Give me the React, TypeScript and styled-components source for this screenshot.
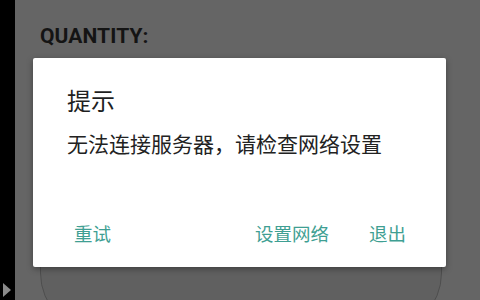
import React from "react";
import styled, { createGlobalStyle } from "styled-components";

const Global = createGlobalStyle`
  html, body { margin: 0; padding: 0; width: 480px; height: 300px; overflow: hidden; background: #000; }
  #root { width: 480px; height: 300px; }
`;

const Screen = styled.div`
  position: relative;
  display: flex;
  width: 480px;
  height: 300px;
  overflow: hidden;
  font-family: "Noto Sans CJK SC", "Noto Sans", sans-serif;
`;

const SideStrip = styled.div`
  width: 15px;
  flex: none;
  background: #000;
  display: flex;
  flex-direction: column;
  justify-content: flex-end;
  align-items: flex-start;
  padding: 0 0 3px 3px;
  box-sizing: border-box;
`;

const Arrow = styled.div`
  width: 0;
  height: 0;
  border-top: 7px solid transparent;
  border-bottom: 7px solid transparent;
  border-left: 8px solid #8a8a8a;
`;

const Content = styled.div`
  flex: 1;
  background: #656565;
  display: flex;
  flex-direction: column;
  padding: 26px 0 0 25px;
  box-sizing: border-box;
`;

const Label = styled.div`
  font-family: Roboto, "Liberation Sans", sans-serif;
  font-weight: 700;
  font-size: 21px;
  line-height: 20px;
  color: #141414;
  letter-spacing: 0.1px;
`;

const Card = styled.div`
  margin: 110px 0 0 0;
  width: 400px;
  height: 175px;
  border: 1px solid #4e4e4e;
  border-radius: 60px;
  background: #606060;
  flex: none;
`;

const Dialog = styled.div`
  position: absolute;
  left: 33px;
  top: 58px;
  width: 413px;
  height: 209px;
  background: #fff;
  border-radius: 2px;
  box-shadow: 0 2px 6px rgba(0, 0, 0, 0.35);
  display: flex;
  flex-direction: column;
  padding: 70px 0 0 34px;
  box-sizing: border-box;
`;

const Title = styled.div`
  position: absolute;
  left: 34px;
  top: 26px;
  font-size: 24px;
  line-height: 32px;
  color: #1f1f1f;
`;

const Message = styled.div`
  font-size: 21px;
  line-height: 30px;
  color: #222;
  white-space: nowrap;
`;

const Actions = styled.div`
  display: flex;
  align-items: center;
  margin-top: 62px;
  padding-left: 7px;
  padding-right: 40px;
`;

const Spacer = styled.div`
  flex: 1;
`;

const Action = styled.span<{ $gap?: number }>`
  font-size: 18.5px;
  line-height: 26px;
  color: #3f9f93;
  margin-left: ${(p) => p.$gap ?? 0}px;
`;

export default function App() {
  return (
    <>
      <Global />
      <Screen>
        <SideStrip>
          <Arrow />
        </SideStrip>
        <Content>
          <Label>QUANTITY:</Label>
          <Card />
        </Content>
        <Dialog>
          <Title>提示</Title>
          <Message>无法连接服务器，请检查网络设置</Message>
          <Actions>
            <Action>重试</Action>
            <Spacer />
            <Action>设置网络</Action>
            <Action $gap={40}>退出</Action>
          </Actions>
        </Dialog>
      </Screen>
    </>
  );
}
